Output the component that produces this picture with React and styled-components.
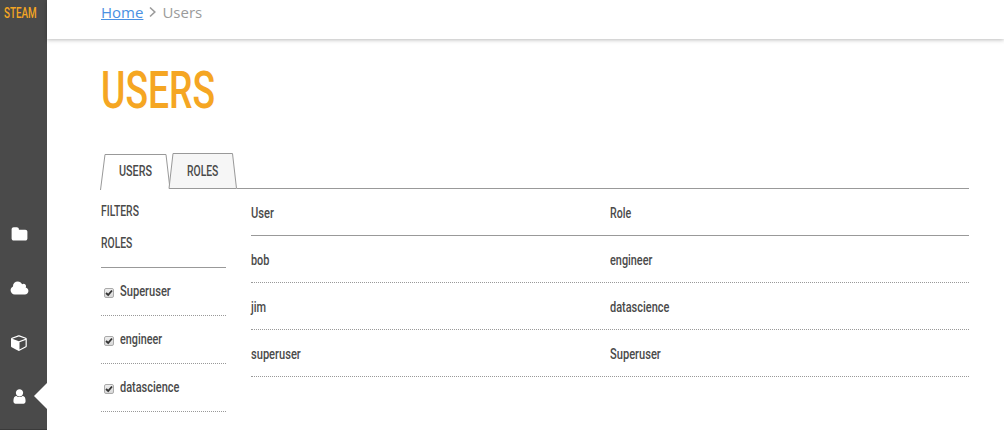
import React from "react";
import styled, { createGlobalStyle } from "styled-components";

const GlobalStyle = createGlobalStyle`
  * { box-sizing: border-box; }
  body { margin: 0; background: #fff; color: #4a4a4a; font-family: Roboto, "Liberation Sans", sans-serif; }
`;

const Page = styled.div`
  display: flex;
  height: 430px;
  overflow: hidden;
`;

const Sidebar = styled.nav`
  display: flex;
  flex-direction: column;
  justify-content: space-between;
  width: 47px;
  flex: none;
  background: #4a4a4a;
  border-bottom: 1px solid #3a3a3a;
`;

/* Condensed display lettering: regular glyphs squeezed horizontally. */
const Narrow = styled.span`
  display: inline-block;
  white-space: nowrap;
  font-size: ${(p) => p.$size || 15}px;
  line-height: ${(p) => p.$line || 20}px;
  font-weight: ${(p) => p.$weight || 500};
  transform: scaleX(${(p) => p.$squeeze || 0.72});
  transform-origin: 0 50%;
`;

const Brand = styled.div`
  padding: 3px 0 0 4px;
  height: 24px;
  color: #f5a623;
`;

const NavList = styled.div`
  display: flex;
  flex-direction: column;
  padding-bottom: 6px;
`;

const NavItem = styled.a`
  display: flex;
  align-items: center;
  justify-content: space-between;
  height: 54px;
  padding-left: ${(p) => p.$inset || 11}px;
  color: #fff;
`;

const Pointer = styled.span`
  border: 13px solid transparent;
  border-left: 0;
  border-right-color: #fff;
`;

const Main = styled.main`
  flex: 1;
  min-width: 0;
`;

const Header = styled.header`
  display: flex;
  align-items: center;
  height: 39px;
  padding: 0 0 15px 54px;
  font: 15px/20px "Open Sans", sans-serif;
  color: #9b9b9b;
  box-shadow: 0 1px 4px rgba(0, 0, 0, 0.27);
`;

const HomeLink = styled.a`
  color: #4a90e2;
  text-decoration: underline;
`;

const Chevron = styled.svg`
  width: 7px;
  height: 12px;
  margin: 0 6px;
`;

const Content = styled.section`
  padding: 20px 35px 0 54px;
`;

const Title = styled.h1`
  margin: 0;
  height: 94px;
  color: #f5a623;
`;

const Tabs = styled.div`
  display: flex;
  height: 36px;
`;

const Tab = styled.div`
  position: relative;
  width: ${(p) => p.$width}px;
  padding: 8px 0 0 18px;
`;

const TabShape = styled.svg`
  position: absolute;
  left: -1px;
  top: 0;
  overflow: visible;
  z-index: -1;
`;

const TabRule = styled.div`
  flex: 1;
  border-bottom: 1px solid #999;
`;

const Columns = styled.div`
  display: flex;
  gap: 25px;
`;

const Filters = styled.aside`
  width: 125px;
  flex: none;
`;

const FilterHeading = styled.div`
  height: ${(p) => p.$height}px;
  padding-top: ${(p) => p.$top}px;
  border-bottom: ${(p) => (p.$ruled ? "1px solid #999" : "0")};
`;

const FilterRow = styled.label`
  display: flex;
  align-items: flex-start;
  gap: 6px;
  height: 48px;
  padding: 13px 0 0 3px;
  border-bottom: 1px dotted #999;
`;

const CheckBox = styled.span`
  display: flex;
  width: 10px;
  height: 10px;
  margin-top: 7px;
  flex: none;
  border: 1px solid #aaa;
  border-radius: 2px;
  background: linear-gradient(#eee, #d8d8d8);
`;

const Table = styled.div`
  flex: 1;
`;

const Row = styled.div`
  display: grid;
  grid-template-columns: 1fr 1fr;
  height: 47px;
  padding-top: 14px;
  border-bottom: 1px ${(p) => (p.$head ? "solid" : "dotted")} #999;
`;

const icons = {
  folder: { box: "0 0 1792 1792", w: 17, d: "M1728 608v704q0 92-66 158t-158 66h-1216q-92 0-158-66t-66-158v-960q0-92 66-158t158-66h320q92 0 158 66t66 158v32h672q92 0 158 66t66 158z" },
  cloud: { box: "0 0 2048 1792", w: 19, d: "M1984 1152q0 159-112.500 271.500t-271.500 112.500h-1088q-185 0-316.500-131.500t-131.500-316.500q0-132 71-241.500t187-163.500q-2-28-2-43 0-212 150-362t362-150q158 0 286.500 88t187.500 230q70-62 166-62 106 0 181 75t75 181q0 75-41 138 129 30 213 134.500t84 239.500z" },
  cube: { box: "0 0 1792 1792", w: 17, d: "M896 1629l640-349v-636l-640 233v752zm-64-865l698-254-698-254-698 254zm832-252v768q0 35-18 65t-49 47l-704 384q-28 16-61 16t-61-16l-704-384q-31-17-49-47t-18-65v-768q0-40 23-73t61-47l704-256q22-8 44-8t44 8l704 256q38 14 61 47t23 73z" },
  user: { box: "0 0 1792 1792", w: 17, d: "M1536 1399q0 109-62.500 187t-150.500 78h-854q-88 0-150.500-78t-62.500-187q0-85 8.500-160.500t31.500-152 58.500-131 94-89 134.500-34.500q131 128 313 128t313-128q76 0 134.500 34.500t94 89 58.500 131 31.500 152 8.500 160.500zm-256-887q0 159-112.500 271.500t-271.500 112.500-271.500-112.500-112.500-271.500 112.500-271.500 271.500-112.500 271.500 112.500 112.500 271.500z" },
};

const Icon = ({ name }) => (
  <svg width={icons[name].w} height="17" viewBox={icons[name].box} fill="currentColor">
    <path d={icons[name].d} />
  </svg>
);

const filters = [["Superuser", 0.74], ["engineer", 0.72], ["datascience", 0.73]];
const users = [["bob", "engineer", 0.725], ["jim", "datascience", 0.73], ["superuser", "Superuser", 0.74]];

export default function App() {
  return (
    <Page>
      <GlobalStyle />
      <Sidebar>
        <Brand><Narrow $size={14.5} $line={19} $squeeze={0.68}>STEAM</Narrow></Brand>
        <NavList>
          <NavItem><Icon name="folder" /></NavItem>
          <NavItem $inset={10}><Icon name="cloud" /></NavItem>
          <NavItem><Icon name="cube" /></NavItem>
          <NavItem><Icon name="user" /><Pointer /></NavItem>
        </NavList>
      </Sidebar>
      <Main>
        <Header>
          <HomeLink>Home</HomeLink>
          <Chevron viewBox="0 0 7 12" fill="none" stroke="#9b9b9b" strokeWidth="1.6"><path d="M1 1.500L5.800 6L1 10.500" /></Chevron>
          <span>Users</span>
        </Header>
        <Content>
          <Title><Narrow $size={52.5} $line={63} $squeeze={0.71}>USERS</Narrow></Title>
          <Tabs>
            <Tab $width={68}>
              <TabShape width="71" height="37"><path d="M0.500 37L5 1.500H66L70 36" fill="#fff" stroke="#999" /></TabShape>
              <Narrow>USERS</Narrow>
            </Tab>
            <Tab $width={68}>
              <TabShape width="70" height="36"><path d="M1 35.500L5 0.500H64.500L68.500 35.500Z" fill="#f6f6f6" stroke="#999" /></TabShape>
              <Narrow $squeeze={0.69}>ROLES</Narrow>
            </Tab>
            <TabRule />
          </Tabs>
          <Columns>
            <Filters>
              <FilterHeading $height={32} $top={12}><Narrow $squeeze={0.69}>FILTERS</Narrow></FilterHeading>
              <FilterHeading $height={47} $top={12} $ruled><Narrow $squeeze={0.69}>ROLES</Narrow></FilterHeading>
              {filters.map(([name, squeeze]) => (
                <FilterRow key={name}>
                  <CheckBox>
                    <svg width="8" height="8" viewBox="0 0 8 8" fill="none" stroke="#333" strokeWidth="1.900"><path d="M1 4L3.200 6L7 1.500" /></svg>
                  </CheckBox>
                  <Narrow $squeeze={squeeze}>{name}</Narrow>
                </FilterRow>
              ))}
            </Filters>
            <Table>
              <Row $head><div><Narrow $squeeze={0.74}>User</Narrow></div><div><Narrow $squeeze={0.71}>Role</Narrow></div></Row>
              {users.map(([user, role, squeeze]) => (
                <Row key={user}>
                  <div><Narrow $squeeze={squeeze}>{user}</Narrow></div>
                  <div><Narrow $squeeze={squeeze}>{role}</Narrow></div>
                </Row>
              ))}
            </Table>
          </Columns>
        </Content>
      </Main>
    </Page>
  );
}
